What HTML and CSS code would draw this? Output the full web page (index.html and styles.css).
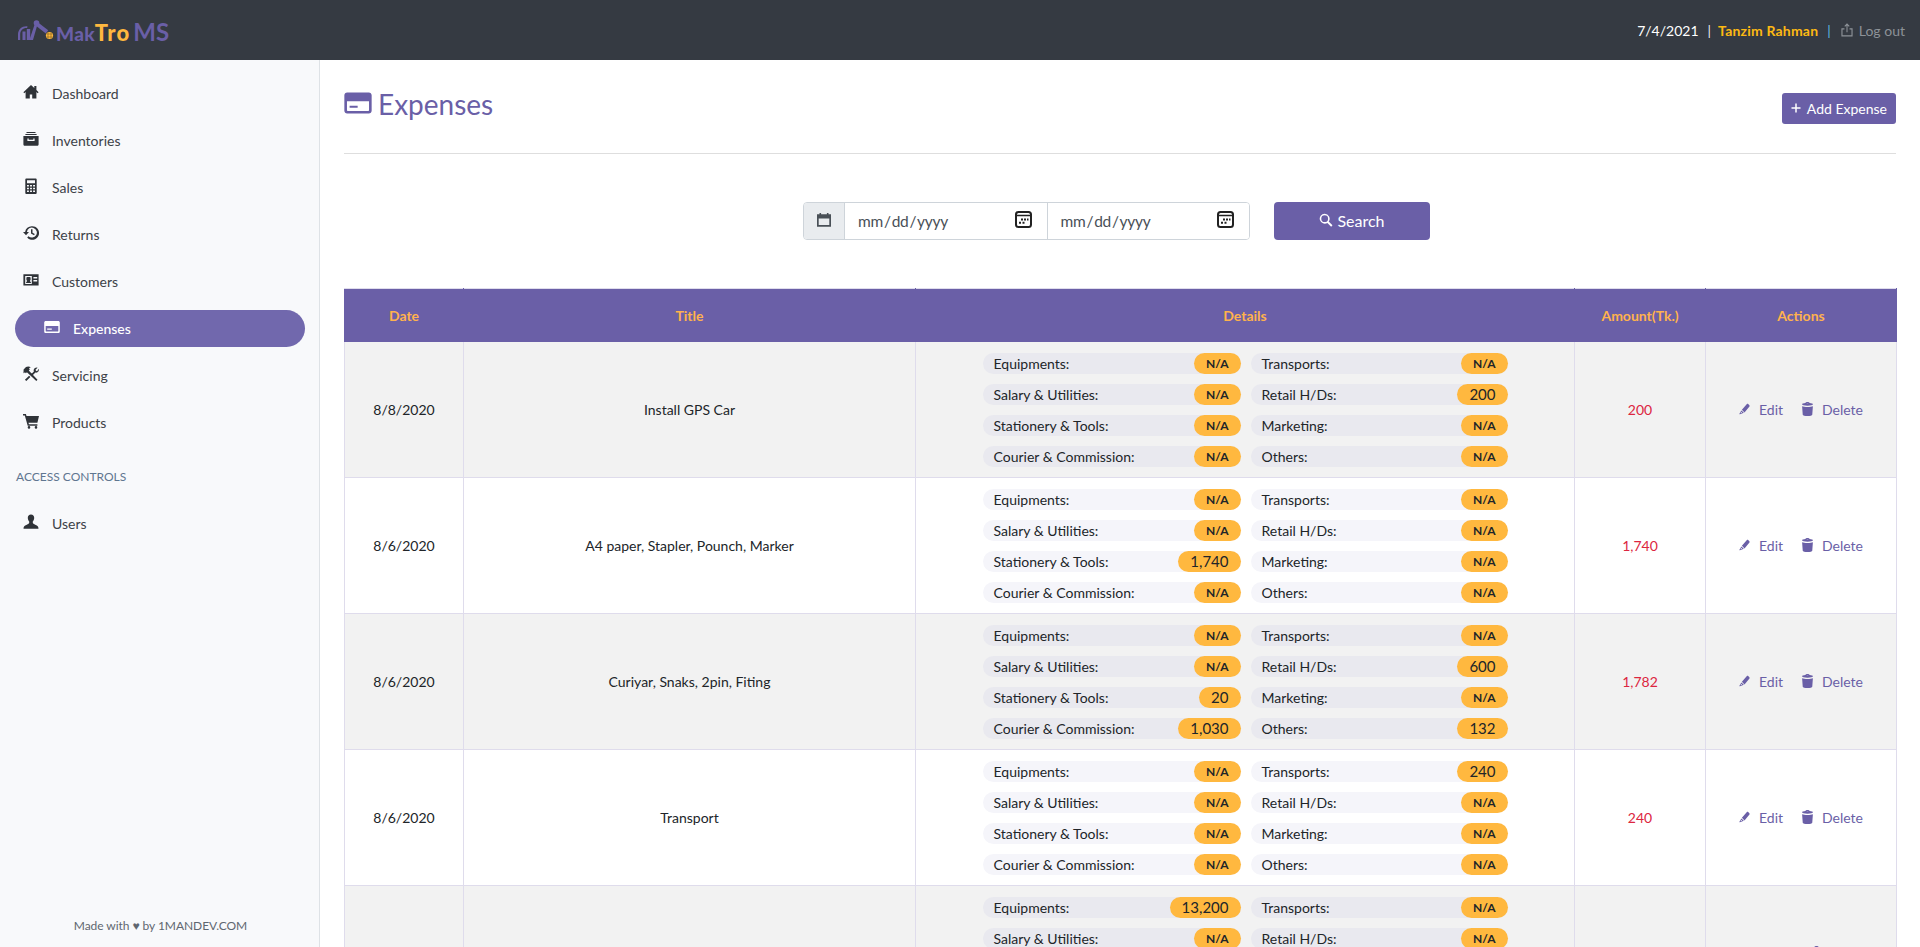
FILE: index.html
```html
<!DOCTYPE html>
<html lang="en">
<head>
<meta charset="utf-8">
<title>Expenses - MakTroMS</title>
<link rel="stylesheet" href="styles.css">
</head>
<body>
<svg class="defs" aria-hidden="true">
  <symbol id="i-home" viewBox="0 0 16 16"><path d="M8 1 .4 8.2l.9 1L2.6 8v6.6h4.2v-4.2h2.4v4.2h4.2V8l1.3 1.2.9-1-2.2-2.1V2h-2.1v2.1z"/></symbol>
  <symbol id="i-inbox" viewBox="0 0 16 16"><path d="M3.5 1h9v1h-9zM2.4 3h11.2v1H2.4zM.4 5h15.2v8.2c0 .9-.7 1.6-1.6 1.6H2c-.9 0-1.6-.7-1.6-1.6zm4 2.6V10h7.2V7.6h-1.3v1.2H5.7V7.6z" fill-rule="evenodd"/></symbol>
  <symbol id="i-calc" viewBox="0 0 16 16"><path d="M3.2.6h9.6c.5 0 .9.4.9.9v13.6c0 .5-.4.9-.9.9H3.200c-.5 0-.9-.4-.9-.9V1.500c0-.5.4-.9.9-.9zM4 2.200v3h8v-3zM4 7v1.600h1.900V7zm3.050 0v1.600h1.900V7zm3.050 0v1.600H12V7zM4 9.700v1.600h1.900V9.700zm3.050 0v1.600h1.900V9.700zm3.050 0v1.600H12V9.700zM4 12.400V14h1.900v-1.600zm3.050 0V14h1.900v-1.600zm3.050 0V14H12v-1.600z" fill-rule="evenodd"/></symbol>
  <symbol id="i-history" viewBox="0 0 16 16"><path d="M8.800 1.200a6.800 6.800 0 0 0-6.700 5.700H0l3 3.400 3-3.400H3.900a5 5 0 1 1 1.500 4.300l-1.200 1.300a6.800 6.800 0 1 0 4.600-11.300zM8 4.200v4.300l3 1.800.8-1.200-2.300-1.400V4.200z"/></symbol>
  <symbol id="i-idcard" viewBox="0 0 16 16"><path d="M.4 2.200h15.200v11.400H.4zM2.200 4v8h6.600V4zm8.200 1v1.400h3.800V5zm0 3v1.400h3.800V8zM4.200 5h2.600c.5 0 .8.400.8.900v1.600c0 .7-.6 1-.6 1.500 0 .6 1 .7 1 2H3c0-1.300 1-1.400 1-2 0-.5-.6-.8-.6-1.500V5.900c0-.5.300-.9.800-.9z" fill-rule="evenodd"/></symbol>
  <symbol id="i-card" viewBox="0 0 16 16"><path d="M1.800 2h12.400c.9 0 1.600.7 1.600 1.600v8.800c0 .9-.7 1.600-1.600 1.600H1.800C.9 14 .2 13.300.2 12.400V3.600C.2 2.700.9 2 1.800 2zm-.1 5v5.100c0 .2.200.4.400.4h11.800c.2 0 .4-.2.400-.4V7zm1.500 2.600h4.600v1.100H3.200z" fill-rule="evenodd"/></symbol>
  <symbol id="i-tools" viewBox="0 0 16 16"><path d="M.6 3.400 3 1c1.500-.8 3.300-.7 4.800.2L5.900 2.300l1 1L5.800 4.400l8.700 9.400-1.200 1.200-9.400-8.800-1 1.100-1-1-1 .9-.4-.3zM15.700 2.800c.5 1.500-.2 3.300-1.700 3.800-.6.200-1.100.2-1.600 0L9.700 9.300l-1.300-1.200 2.500-2.600c-.3-.6-.3-1.300-.1-1.900C11.300 2.100 13 1.300 14.500 1.700l-2 2 .5 1.100 1.100.4zM6.100 9.700l1.300 1.300-4.100 4-1.400-1.300z"/></symbol>
  <symbol id="i-cart" viewBox="0 0 16 16"><path d="M0 1h2.900l.6 2H16l-1.600 6.800H5.500l.4 1.500h8.500v1.500H4.700L1.800 2.500H0zM6 13.100a1.300 1.300 0 1 1 0 2.600 1.300 1.300 0 0 1 0-2.600zm7 0a1.300 1.300 0 1 1 0 2.600 1.300 1.300 0 0 1 0-2.600z"/></symbol>
  <symbol id="i-user" viewBox="0 0 16 16"><path d="M8 .4c2 0 3.200 1.400 3.200 3.400 0 1.700-.8 3.100-1.500 4 0 1.800 1 2.400 3 3.200 1.700.7 2.800 1.300 2.800 3.800H.5c0-2.500 1.100-3.100 2.800-3.800 2-.8 3-1.400 3-3.200-.7-.9-1.500-2.300-1.500-4C4.800 1.800 6 .4 8 .4z"/></symbol>
  <symbol id="i-search" viewBox="0 0 16 16"><path d="M6.500.8a5.700 5.700 0 0 1 4.600 9l4.300 4.300-1.500 1.500-4.300-4.300A5.700 5.700 0 1 1 6.500.8zm0 1.800a3.900 3.900 0 1 0 0 7.800 3.900 3.900 0 0 0 0-7.800z" fill-rule="evenodd"/></symbol>
  <symbol id="i-plus" viewBox="0 0 16 16"><path d="M7 2h2v5h5v2H9v5H7V9H2V7h5z"/></symbol>
  <symbol id="i-pencil" viewBox="0 0 16 16"><path d="M11.500.8c.6-.4 1.300-.3 1.800.1l1.800 1.700c.5.5.5 1.300.1 1.900L8 13l-3.800-3.900zM3.500 10.100l3.500 3.500-5.600 2c-.5.100-.9-.3-.8-.8zm-.3 2-.9 2.100 2.200-.8z" fill-rule="evenodd"/></symbol>
  <symbol id="i-trash" viewBox="2.800 .4 10.400 15.400" preserveAspectRatio="none"><path d="M8 .4c1 0 1.700.4 2 1.100 1.800.2 3.200.7 3.200 1.500S11 4.600 8 4.600 2.800 3.800 2.800 3 4.200 1.700 6 1.500C6.300.8 7 .4 8 .4zM8 1.600c-.4 0-.7.100-.9.300h1.800c-.2-.2-.5-.3-.9-.3zM2.900 5C4 5.600 6 5.900 8 5.900S12 5.600 13.100 5l-.6 9.400c-.1.900-2 1.400-4.500 1.400s-4.400-.5-4.500-1.400z" fill-rule="evenodd"/></symbol>
  <symbol id="i-share" viewBox="0 0 16 16"><path d="M8 .4l3 3-.9.9-1.500-1.500v7.900H7.400V2.800L5.900 4.300 5 3.400zM1.600 6h3.500v1.300H2.900v6.800h10.200V7.300h-2.200V6h3.500v9.400H1.600z" fill-rule="evenodd"/></symbol>
  <symbol id="i-cal" viewBox="0 0 16 16"><path d="M3.500 1h1.600v1.300h5.800V1h1.600v1.300H15v12.500H1V2.300h2.500zM2.700 6.400v6.700h10.600V6.400z" fill-rule="evenodd"/></symbol>
  <symbol id="i-robot" viewBox="0 0 36 21">
    <path d="M0 14.500C0 9 4.200 5.600 9.500 6.200l-.4 1.900C5.200 7.800 2.200 10.400 2.200 14.500V20H0z"/>
    <path d="M4.500 11.500h3V20h-3zM8.800 9h3.400v11H8.800z"/>
    <path d="M11.400 20 17 3.200l2.600.9L15 20z"/>
    <circle cx="18.500" cy="3" r="2.800"/>
    <path d="m18.800 1.500 11.400 8.700-2.400 3.400L17 5z"/>
    <circle cx="31.500" cy="15.500" r="3.600" fill="#ffb83f"/>
    <path d="M28.500 14h6M28.500 17h6M30 12.500v6M33 12.500v6" stroke="#7a5f20" stroke-width=".6" fill="none"/>
  </symbol>
</svg>

<header class="topbar">
  <div class="logo">
    <svg class="logo-mark"><use href="#i-robot"/></svg>
    <span class="logo-mak">Mak</span><span class="logo-tro">Tro</span><span class="logo-ms">MS</span>
  </div>
  <div class="userbar">
    <span class="today">7/4/2021</span>
    <span class="sep">|</span>
    <span class="uname">Tanzim Rahman</span>
    <span class="sep sep-blue">|</span>
    <a class="logout"><svg class="ic-logout"><use href="#i-share"/></svg>Log out</a>
  </div>
</header>

<div class="shell">
  <aside class="sidebar">
    <nav class="nav">
      <a class="nav-item"><svg class="nav-ic"><use href="#i-home"/></svg>Dashboard</a>
      <a class="nav-item"><svg class="nav-ic"><use href="#i-inbox"/></svg>Inventories</a>
      <a class="nav-item"><svg class="nav-ic"><use href="#i-calc"/></svg>Sales</a>
      <a class="nav-item"><svg class="nav-ic"><use href="#i-history"/></svg>Returns</a>
      <a class="nav-item"><svg class="nav-ic"><use href="#i-idcard"/></svg>Customers</a>
      <a class="nav-item active"><svg class="nav-ic"><use href="#i-card"/></svg>Expenses</a>
      <a class="nav-item"><svg class="nav-ic"><use href="#i-tools"/></svg>Servicing</a>
      <a class="nav-item"><svg class="nav-ic"><use href="#i-cart"/></svg>Products</a>
      <div class="nav-label">ACCESS CONTROLS</div>
      <a class="nav-item"><svg class="nav-ic"><use href="#i-user"/></svg>Users</a>
    </nav>
    <div class="made">Made with &#9829; by 1MANDEV.COM</div>
  </aside>

  <main class="main">
    <div class="page-head">
      <h1 class="page-title"><svg class="title-ic"><use href="#i-card"/></svg>Expenses</h1>
      <a class="btn-add"><svg class="plus-ic"><use href="#i-plus"/></svg>Add Expense</a>
    </div>

    <form class="filter">
      <div class="date-group">
        <span class="date-pre"><svg class="cal-ic"><use href="#i-cal"/></svg></span>
        <input class="date-input" type="date">
        <input class="date-input" type="date">
      </div>
      <button class="btn-search" type="button"><svg class="search-ic"><use href="#i-search"/></svg><span class="search-label">Search</span></button>
    </form>

    <table class="grid">
      <colgroup>
        <col class="c-date"><col class="c-title"><col class="c-details"><col class="c-amt"><col class="c-act">
      </colgroup>
      <thead>
        <tr><th>Date</th><th>Title</th><th>Details</th><th>Amount(Tk.)</th><th>Actions</th></tr>
      </thead>
      <tbody>
        <tr>
          <td>8/8/2020</td><td>Install GPS Car</td>
          <td><div class="pills">
            <div class="pill"><span>Equipments:</span><b>N/A</b></div><div class="pill"><span>Transports:</span><b>N/A</b></div>
            <div class="pill"><span>Salary &amp; Utilities:</span><b>N/A</b></div><div class="pill"><span>Retail H/Ds:</span><b class="num">200</b></div>
            <div class="pill"><span>Stationery &amp; Tools:</span><b>N/A</b></div><div class="pill"><span>Marketing:</span><b>N/A</b></div>
            <div class="pill"><span>Courier &amp; Commission:</span><b>N/A</b></div><div class="pill"><span>Others:</span><b>N/A</b></div>
          </div></td>
          <td class="amt">200</td>
          <td><div class="acts"><a class="act"><svg class="act-ic"><use href="#i-pencil"/></svg>Edit</a><a class="act"><svg class="act-ic"><use href="#i-trash"/></svg>Delete</a></div></td>
        </tr>
        <tr>
          <td>8/6/2020</td><td>A4 paper, Stapler, Pounch, Marker</td>
          <td><div class="pills">
            <div class="pill"><span>Equipments:</span><b>N/A</b></div><div class="pill"><span>Transports:</span><b>N/A</b></div>
            <div class="pill"><span>Salary &amp; Utilities:</span><b>N/A</b></div><div class="pill"><span>Retail H/Ds:</span><b>N/A</b></div>
            <div class="pill"><span>Stationery &amp; Tools:</span><b class="num">1,740</b></div><div class="pill"><span>Marketing:</span><b>N/A</b></div>
            <div class="pill"><span>Courier &amp; Commission:</span><b>N/A</b></div><div class="pill"><span>Others:</span><b>N/A</b></div>
          </div></td>
          <td class="amt">1,740</td>
          <td><div class="acts"><a class="act"><svg class="act-ic"><use href="#i-pencil"/></svg>Edit</a><a class="act"><svg class="act-ic"><use href="#i-trash"/></svg>Delete</a></div></td>
        </tr>
        <tr>
          <td>8/6/2020</td><td>Curiyar, Snaks, 2pin, Fiting</td>
          <td><div class="pills">
            <div class="pill"><span>Equipments:</span><b>N/A</b></div><div class="pill"><span>Transports:</span><b>N/A</b></div>
            <div class="pill"><span>Salary &amp; Utilities:</span><b>N/A</b></div><div class="pill"><span>Retail H/Ds:</span><b class="num">600</b></div>
            <div class="pill"><span>Stationery &amp; Tools:</span><b class="num">20</b></div><div class="pill"><span>Marketing:</span><b>N/A</b></div>
            <div class="pill"><span>Courier &amp; Commission:</span><b class="num">1,030</b></div><div class="pill"><span>Others:</span><b class="num">132</b></div>
          </div></td>
          <td class="amt">1,782</td>
          <td><div class="acts"><a class="act"><svg class="act-ic"><use href="#i-pencil"/></svg>Edit</a><a class="act"><svg class="act-ic"><use href="#i-trash"/></svg>Delete</a></div></td>
        </tr>
        <tr>
          <td>8/6/2020</td><td>Transport</td>
          <td><div class="pills">
            <div class="pill"><span>Equipments:</span><b>N/A</b></div><div class="pill"><span>Transports:</span><b class="num">240</b></div>
            <div class="pill"><span>Salary &amp; Utilities:</span><b>N/A</b></div><div class="pill"><span>Retail H/Ds:</span><b>N/A</b></div>
            <div class="pill"><span>Stationery &amp; Tools:</span><b>N/A</b></div><div class="pill"><span>Marketing:</span><b>N/A</b></div>
            <div class="pill"><span>Courier &amp; Commission:</span><b>N/A</b></div><div class="pill"><span>Others:</span><b>N/A</b></div>
          </div></td>
          <td class="amt">240</td>
          <td><div class="acts"><a class="act"><svg class="act-ic"><use href="#i-pencil"/></svg>Edit</a><a class="act"><svg class="act-ic"><use href="#i-trash"/></svg>Delete</a></div></td>
        </tr>
        <tr>
          <td></td><td></td>
          <td><div class="pills pills-cut">
            <div class="pill"><span>Equipments:</span><b class="num">13,200</b></div><div class="pill"><span>Transports:</span><b>N/A</b></div>
            <div class="pill"><span>Salary &amp; Utilities:</span><b>N/A</b></div><div class="pill"><span>Retail H/Ds:</span><b>N/A</b></div>
          </div></td>
          <td class="amt"></td>
          <td><div class="acts"><a class="act"><svg class="act-ic"><use href="#i-pencil"/></svg></a><a class="act"><svg class="act-ic"><use href="#i-trash"/></svg></a></div></td>
        </tr>
      </tbody>
    </table>
  </main>
</div>
</body>
</html>
```
FILE: styles.css
```css
* { box-sizing: border-box; }
html, body { margin: 0; height: 100%; overflow: hidden; }
body {
  font-family: Lato, "Liberation Sans", sans-serif;
  font-size: 14px;
  line-height: 1.5;
  color: #212529;
  background: #fff;
  display: flex;
  flex-direction: column;
}
.defs { display: none; }
svg { fill: currentColor; display: block; flex: none; }

/* top bar */
.topbar {
  height: 60px;
  flex: none;
  background: #353a42;
  display: flex;
  align-items: center;
  justify-content: space-between;
  padding: 0 15px 0 18px;
}
.logo { display: flex; align-items: baseline; line-height: 1; font-weight: 900; padding-top: 4px; }
.logo-mark { width: 36px; height: 21px; color: #6a5fa7; margin-right: 2px; align-self: flex-end; margin-bottom: 3px; }
.logo-mak { color: #6a5fa7; font-size: 19px; letter-spacing: .3px; }
.logo-tro { color: #ffb83f; font-size: 22px; letter-spacing: 1.2px; }
.logo-ms { color: #6a5fa7; font-weight: 700; font-size: 24px; margin-left: 3px; }
.userbar { display: flex; align-items: center; color: #fff; }
.sep { margin: 0 7px 0 9px; color: #e8edf2; }
.sep-blue { color: #5bb4e0; margin: 0 9px 0 9px; }
.uname { color: #fdb913; font-weight: 700; letter-spacing: .2px; }
.logout { display: flex; align-items: center; color: #8d9298; }
.ic-logout { width: 14px; height: 14px; margin-right: 5px; }

/* shell */
.shell { flex: 1; display: flex; min-height: 0; }
.sidebar {
  width: 320px;
  flex: none;
  background: #f8f9fb;
  border-right: 1px solid #dee2e6;
  display: flex;
  flex-direction: column;
  padding-top: 15px;
}
.nav { display: flex; flex-direction: column; gap: 10px; }
.nav-item {
  height: 37px;
  margin: 0 14px 0 15px;
  padding-left: 8px;
  display: flex;
  align-items: center;
  gap: 13px;
  color: #3d4248;
  border-radius: 19px;
}
.nav-ic { width: 16px; height: 16px; margin-top: -3px; color: #2f3338; }
.nav-item.active { background: #7168ad; color: #fff; padding-left: 29px; font-weight: 500; }
.active .nav-ic { color: #fff; }
.nav-label {
  font-size: 12px;
  color: #5f7690;
  padding-left: 16px;
  margin: 18px 0 10px;
  line-height: 16px;
}
.made { margin-top: auto; padding: 0 0 12px 2px; text-align: center; font-size: 12px; letter-spacing: -.05px; color: #5f6770; }

/* main */
.main { flex: 1; min-width: 0; padding: 0 24px; overflow: hidden; }
.page-head {
  height: 94px;
  padding-top: 27px;
  border-bottom: 1px solid #dedede;
  display: flex;
  justify-content: space-between;
  align-items: flex-start;
}
.page-title {
  margin: 0;
  display: flex;
  align-items: center;
  font-size: 28px;
  line-height: 34px;
  font-weight: 400;
  color: #6a5fa7;
}
.title-ic { width: 28px; height: 28px; margin: -2px 6px 0 0; }
.btn-add {
  margin-top: 6px;
  height: 31px;
  padding: 0 9px 0 8px;
  display: flex;
  align-items: center;
  gap: 5px;
  background: #6a5fa7;
  color: #fff;
  border-radius: 3px;
}
.plus-ic { width: 12px; height: 12px; margin-top: -2px; }

.filter {
  display: flex;
  justify-content: center;
  gap: 24px;
  margin: 48px 0;
  padding-right: 7px;
}
.date-group {
  height: 38px;
  width: 447px;
  display: flex;
  border: 1px solid #ced4da;
  border-radius: 4px;
  overflow: hidden;
}
.date-pre {
  width: 41px;
  flex: none;
  background: #e9ecef;
  border-right: 1px solid #ced4da;
  display: flex;
  align-items: center;
  justify-content: center;
  color: #495057;
}
.cal-ic { width: 16px; height: 16px; margin-top: -2px; }
.date-input {
  flex: 1;
  min-width: 0;
  border: 0;
  padding: 0 15px 0 12px;
  font: 15.500px Lato, "Liberation Sans", sans-serif;
  letter-spacing: -.3px;
  color: #495057;
  background: #fff;
  outline: 0;
}
.date-input::-webkit-calendar-picker-indicator {
  width: 17px;
  height: 17px;
  padding: 0;
  margin: -3px 0 0;
  background: url("data:image/svg+xml,%3Csvg xmlns='http://www.w3.org/2000/svg' viewBox='0 0 17 17'%3E%3Crect x='1' y='1' width='15' height='15' rx='2.500' fill='none' stroke='%23222' stroke-width='2'/%3E%3Cpath d='M1 4.500h15' stroke='%23222' stroke-width='1.500'/%3E%3Cpath d='M6 7.500h2V9.500H6zM9 7.500h2V9.500H9zM12 7.500h1.500V9.500H12zM4 10.800h2v2H4zM7.500 10.800h2v2h-2z' fill='%23222'/%3E%3C/svg%3E") no-repeat center / contain;
}
.date-input + .date-input { border-left: 1px solid #ced4da; }
.btn-search {
  width: 156px;
  height: 38px;
  border: 0;
  border-radius: 4px;
  background: #6a5fa7;
  color: #fff;
  font: 16px Lato, "Liberation Sans", sans-serif;
  display: flex;
  align-items: center;
  justify-content: center;
  gap: 4px;
}
.search-label { margin-top: -2px; }
.search-ic { width: 14px; height: 14px; margin-top: -2px; }

/* table */
.grid { width: 1552px; table-layout: fixed; border-collapse: collapse; }
.c-date { width: 119px; }
.c-title { width: 452px; }
.c-details { width: 659px; }
.c-amt { width: 131px; }
.c-act { width: 191px; }
.grid th, .grid td { border: 1px solid #dfdcec; text-align: center; padding: 0; }
.grid th {
  height: 53px;
  background: #6a5fa7;
  color: #ffb24d;
  font-weight: 700;
  border-color: #dfdcec #6a5fa7 #6a5fa7;
}
.grid td { height: 136px; }
.grid tbody tr:nth-child(odd) { background: #f2f2f2; }
.pills { width: 525px; margin: 0 auto; display: grid; grid-template-columns: 258px 257px; column-gap: 10px; row-gap: 10px; }
.pills-cut { margin-bottom: 62px; }
.pill {
  height: 21px;
  border-radius: 11px;
  background: #f5f5fa;
  display: flex;
  align-items: center;
  justify-content: space-between;
  padding-left: 11px;
  line-height: 21px;
}
.grid tbody tr:nth-child(odd) .pill { background: #e9e9ef; }
.pill b {
  background: #ffb83f;
  border-radius: 11px;
  padding: 0 12px;
  height: 21px;
  font-size: 12px;
  font-weight: 700;
}
.pill b.num { font-size: 15px; font-weight: 400; }
.amt { color: #dc2640; }
.acts { display: flex; justify-content: center; gap: 19px; }
.act { display: flex; align-items: center; gap: 9px; color: #6a5fa7; }
.act-ic { width: 11px; height: 14px; margin-top: -2px; }
```
